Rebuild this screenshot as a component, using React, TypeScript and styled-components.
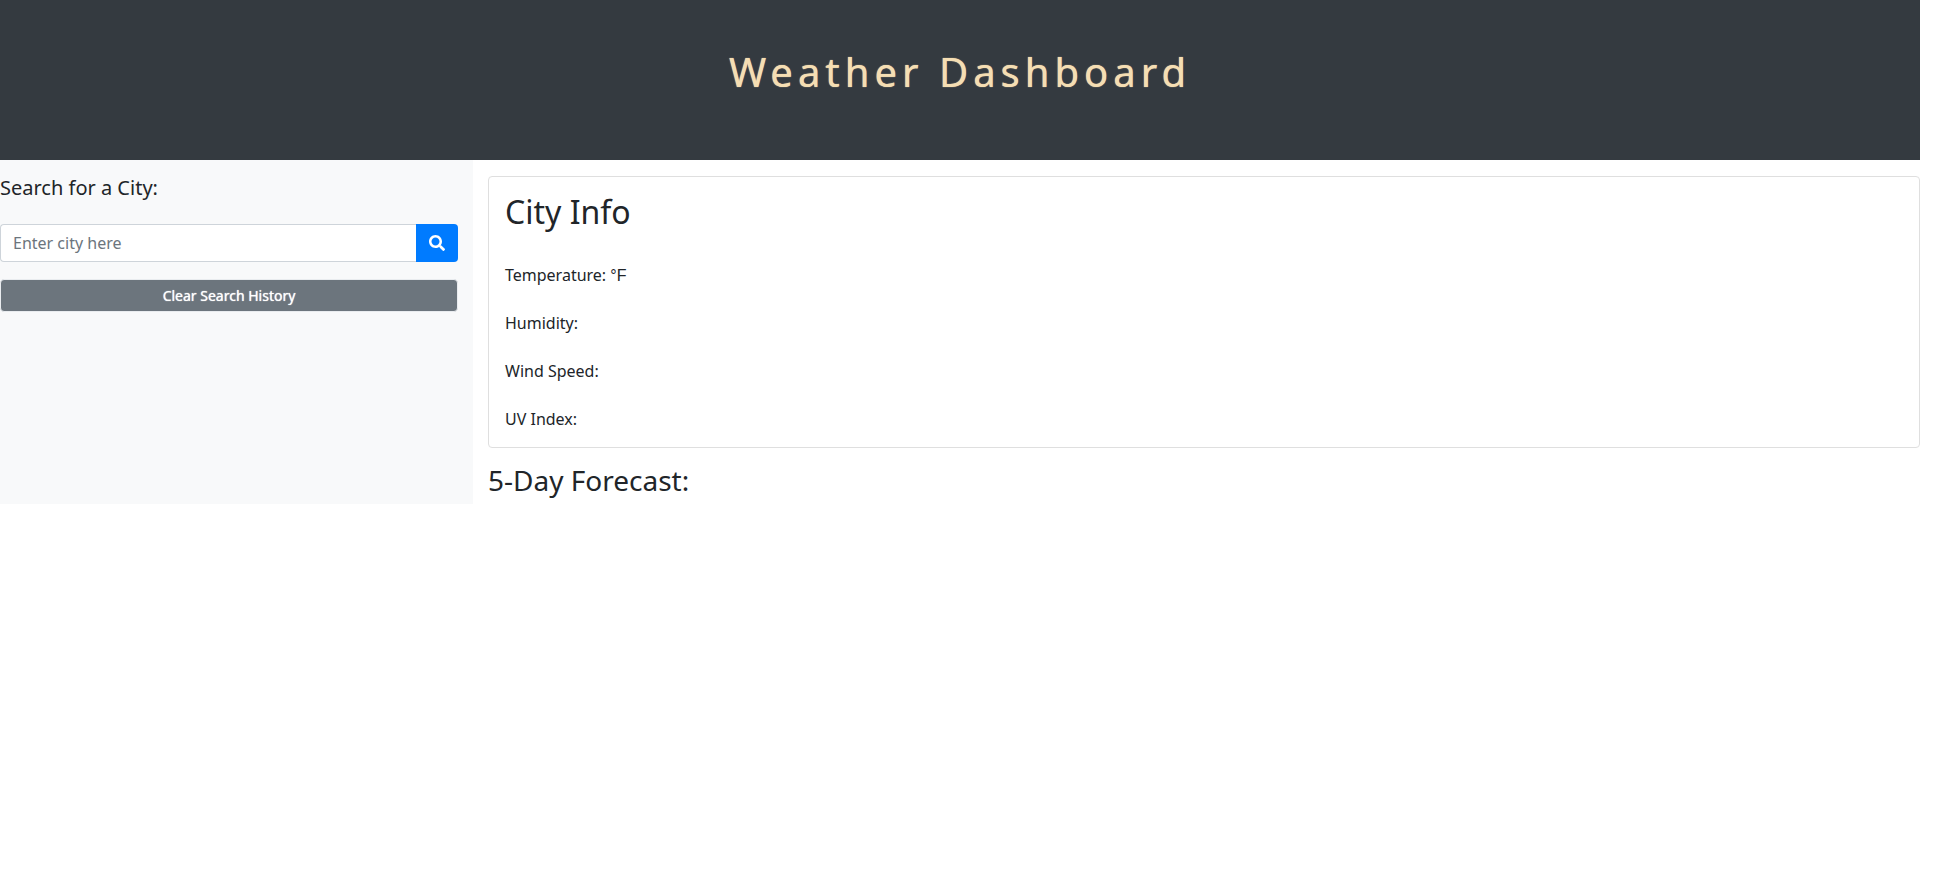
import React from "react";
import styled, { createGlobalStyle } from "styled-components";
import { FaSearch } from "react-icons/fa";

const GlobalStyle = createGlobalStyle`
  *, *::before, *::after { box-sizing: border-box; }
  body {
    margin: 0;
    background: #fff;
    color: #212529;
    font-family: "Noto Sans", "Liberation Sans", sans-serif;
    font-size: 16px;
    line-height: 24px;
  }
  h1, h2, h3, h4, p { margin: 0; }
`;

const Page = styled.div`
  padding-right: 15px;
`;

const Header = styled.header`
  padding: 48px 32px 64px;
  background: #343a40;
  text-align: center;
`;

const Title = styled.h1`
  color: wheat;
  font-size: 40px;
  font-weight: 400;
  line-height: 48px;
  letter-spacing: 5px;
  text-shadow: 0 0 1px wheat;
`;

const Columns = styled.div`
  display: flex;
`;

const Sidebar = styled.aside`
  flex: 0 0 calc(25% - 7px);
  padding: 16px 15px 16px 0;
  background: #f8f9fa;
`;

const SearchForm = styled.form`
  display: flex;
  flex-wrap: wrap;
`;

const SearchLabel = styled.label`
  flex: 0 0 100%;
  margin-bottom: 24px;
  font-size: 20px;
  line-height: 24px;
`;

const SearchInput = styled.input`
  flex: 1;
  min-width: 0;
  height: 38px;
  padding: 6px 12px;
  border: 1px solid #ced4da;
  border-right: 0;
  border-radius: 4px 0 0 4px;
  background: #fff;
  color: #495057;
  font: inherit;

  &::placeholder {
    color: #6c757d;
    opacity: 1;
  }
`;

const SearchButton = styled.button`
  display: flex;
  align-items: center;
  justify-content: center;
  width: 42px;
  height: 38px;
  padding: 0;
  border: 0;
  border-radius: 0 4px 4px 0;
  background: #007bff;
  color: #fff;
  font-size: 16px;
`;

const ClearButton = styled.button`
  display: block;
  width: 100%;
  margin-top: 17px;
  padding: 5px 8px;
  border: 1px solid #e9ecef;
  border-radius: 4px;
  background: #6c757d;
  color: #fff;
  font-family: inherit;
  font-size: 14px;
  font-weight: 400;
  line-height: 21px;
  text-shadow: 0 0 1px #fff;
`;

const Main = styled.main`
  flex: 1;
  padding: 16px 0 7px 15px;
`;

const Card = styled.section`
  padding: 16px;
  border: 1px solid #dfdfdf;
  border-radius: 4px;
`;

const CardTitle = styled.h2`
  margin-bottom: 32px;
  font-size: 32px;
  font-weight: 400;
  line-height: 38px;
`;

const Reading = styled.p`
  & + & {
    margin-top: 24px;
  }
`;

const Unit = styled.span`
  font-family: "Liberation Sans", sans-serif;
  line-height: 16px;
`;

const ForecastTitle = styled.h3`
  margin-top: 15px;
  font-size: 28px;
  font-weight: 400;
  line-height: 34px;
`;

const readings = [
  { label: "Temperature:", unit: "°F" },
  { label: "Humidity:" },
  { label: "Wind Speed:" },
  { label: "UV Index:" },
];

export default function App() {
  return (
    <Page>
      <GlobalStyle />
      <Header>
        <Title>Weather Dashboard</Title>
      </Header>
      <Columns>
        <Sidebar>
          <SearchForm onSubmit={(event: React.FormEvent) => event.preventDefault()}>
            <SearchLabel htmlFor="city">Search for a City:</SearchLabel>
            <SearchInput id="city" type="text" placeholder="Enter city here" />
            <SearchButton type="submit" aria-label="Search">
              <FaSearch />
            </SearchButton>
          </SearchForm>
          <ClearButton type="button">Clear Search History</ClearButton>
        </Sidebar>
        <Main>
          <Card>
            <CardTitle>City Info</CardTitle>
            {readings.map(({ label, unit }) => (
              <Reading key={label}>
                {label} {unit && <Unit>{unit}</Unit>}
              </Reading>
            ))}
          </Card>
          <ForecastTitle>5-Day Forecast:</ForecastTitle>
        </Main>
      </Columns>
    </Page>
  );
}
